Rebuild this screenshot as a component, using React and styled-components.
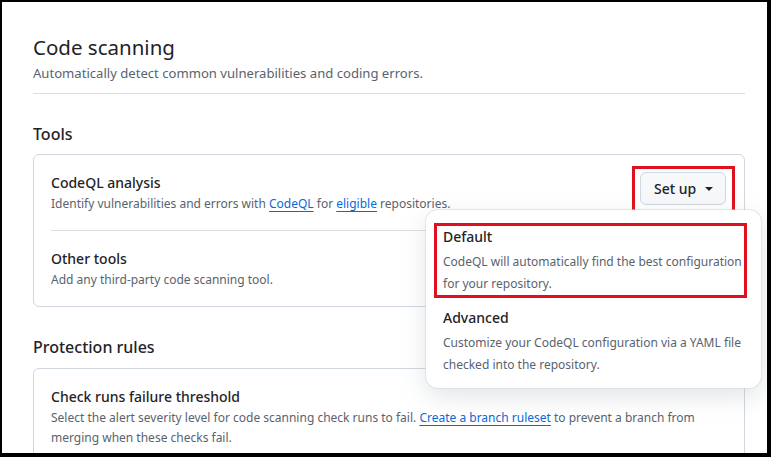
import styled, { createGlobalStyle } from "styled-components";

const Global = createGlobalStyle`
    html, body {
        margin: 0;
        padding: 0;
        background: #000;
    }
    body {
        font-family: "Noto Sans", "Segoe UI", sans-serif;
        color: #1f2328;
    }
`

const Frame = styled.div`
    position: relative;
    width: 771px;
    height: 457px;
    box-sizing: border-box;
    border-style: solid;
    border-color: #000;
    border-width: 2px 4px 4px 2px;
    background: #fff;
    overflow: hidden;
`

const Page = styled.div`
    padding: 30px 22px 0 31px;
`

const Header = styled.div`
    padding-bottom: 11px;
    border-bottom: 1px solid #d8dee4;
`

const Title = styled.h1`
    margin: 0;
    font-size: 20.5px;
    font-weight: 400;
    line-height: 30px;
`

const Subtitle = styled.p`
    margin: 2px 0 0;
    font-size: 13.1px;
    color: #59636e;
`

const SectionTitle = styled.h2`
    margin: ${p => p.$top}px 0 ${p => p.$bottom}px;
    font-size: 16px;
    font-weight: 500;
    line-height: 24px;
`

const Card = styled.div`
    border: 1px solid #d0d7de;
    border-radius: 6px;
    padding: 0 0 0 17px;
`

const Row = styled.div`
    display: flex;
    align-items: flex-start;
    padding: 17px 18px 16px 0;
    border-top: ${p => (p.$first ? "none" : "1px solid #d8dee4")};
`

const RowText = styled.div`
    flex: 1;
`

const RowTitle = styled.div`
    font-size: 14px;
    font-weight: 500;
    line-height: 22px;
`

const RowDesc = styled.div`
    font-size: 12px;
    color: #59636e;
    line-height: 20px;
`

const Link = styled.a`
    color: #0969da;
    text-decoration: underline;
    text-underline-offset: 3px;
`

const Highlight = styled.div`
    margin: -6px -9px -8px -8px;
    padding: 3px 6px 5px 5px;
    border: 3px solid #e0101e;
`

const Button = styled.button`
    display: flex;
    align-items: center;
    gap: 9px;
    height: 33px;
    width: 86px;
    padding: 0 0 0 13px;
    font-family: inherit;
    font-size: 14px;
    font-weight: 500;
    color: #1f2328;
    background: #f6f8fa;
    border: 1px solid #d0d7de;
    border-radius: 6px;
`

const Caret = styled.span`
    width: 0;
    height: 0;
    border-left: 4px solid transparent;
    border-right: 4px solid transparent;
    border-top: 4px solid #1f2328;
`

const Menu = styled.div`
    position: absolute;
    left: 424px;
    top: 208px;
    width: 335px;
    display: flex;
    flex-direction: column;
    gap: 6px;
    padding: 13px 14px 9px 8px;
    box-sizing: border-box;
    background: #fff;
    border-radius: 12px;
    box-shadow: 0 0 0 1px rgba(208, 215, 222, 0.55), 0 8px 24px rgba(140, 149, 159, 0.25);
`

const Item = styled.div`
    padding: 0 0 0 6px;
    border: 3px solid ${p => (p.$marked ? "#e0101e" : "transparent")};
`

const ItemTitle = styled.div`
    font-size: 14px;
    font-weight: 500;
    line-height: 22px;
`

const ItemDesc = styled.div`
    margin-top: 3px;
    font-size: 12px;
    color: #59636e;
    line-height: 22px;
`

export default function App() {
    return (
        <>
            <Global />
            <Frame>
                <Page>
                    <Header>
                        <Title>Code scanning</Title>
                        <Subtitle>Automatically detect common vulnerabilities and coding errors.</Subtitle>
                    </Header>
                    <SectionTitle $top={28} $bottom={8}>Tools</SectionTitle>
                    <Card>
                        <Row $first>
                            <RowText>
                                <RowTitle>CodeQL analysis</RowTitle>
                                <RowDesc>
                                    Identify vulnerabilities and errors with <Link>CodeQL</Link> for <Link>eligible</Link> repositories.
                                </RowDesc>
                            </RowText>
                            <Highlight>
                                <Button>
                                    Set up <Caret />
                                </Button>
                            </Highlight>
                        </Row>
                        <Row>
                            <RowText>
                                <RowTitle>Other tools</RowTitle>
                                <RowDesc>Add any third-party code scanning tool.</RowDesc>
                            </RowText>
                        </Row>
                    </Card>
                    <SectionTitle $top={28} $bottom={9}>Protection rules</SectionTitle>
                    <Card>
                        <Row $first>
                            <RowText>
                                <RowTitle>Check runs failure threshold</RowTitle>
                                <RowDesc>
                                    Select the alert severity level for code scanning check runs to fail. <Link>Create a branch ruleset</Link> to prevent a branch from merging when these checks fail.
                                </RowDesc>
                            </RowText>
                        </Row>
                    </Card>
                </Page>
                <Menu>
                    <Item $marked>
                        <ItemTitle>Default</ItemTitle>
                        <ItemDesc>CodeQL will automatically find the best configuration for your repository.</ItemDesc>
                    </Item>
                    <Item>
                        <ItemTitle>Advanced</ItemTitle>
                        <ItemDesc>Customize your CodeQL configuration via a YAML file checked into the repository.</ItemDesc>
                    </Item>
                </Menu>
            </Frame>
        </>
    )
}
